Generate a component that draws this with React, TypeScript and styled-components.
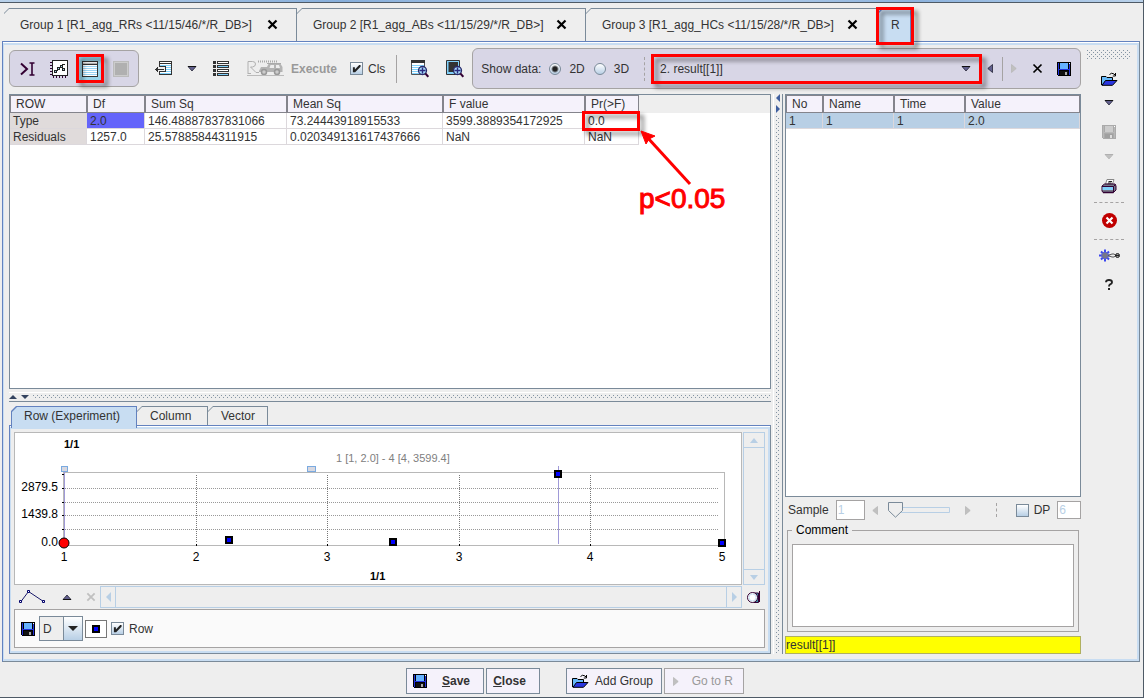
import React from "react";
import styled, { createGlobalStyle, css } from "styled-components";

const c = {
  face: "#eeeeee",
  blue: "#6382bf",
  steel: "#7a8a99",
  sky: "#c8ddf2",
  pale: "#b8cfe5",
  group: "#d8d6e6",
  cell: "#f5f2fb",
  grey: "#a5a3a3",
  text: "#333333",
  red: "#ff0000",
};

const Global = createGlobalStyle`
  * { box-sizing: border-box; }
  body { margin: 0; background: ${c.face}; }
  body, button, input, select, textarea, table {
    font-family: "Liberation Sans", Arial, sans-serif;
    font-size: 12px;
    line-height: 14px;
    color: ${c.text};
  }
  svg { display: block; flex: none; }
`;

const Window = styled.div`
  display: flex;
  flex-direction: column;
  min-height: 100vh;
  border-right: 1px solid #4e5a66;
  border-bottom: 1px solid #4e5a66;
`;

const TopStrip = styled.div`
  height: 3px;
  background: linear-gradient(90deg, #b9d1ea, #86aedb 30%, #bcd4ee 60%, #8cb2dd 80%, #b9d1ea);
  border-bottom: 1px solid #4e5a66;
`;

/* ---------- tabs ---------- */

const TabList = styled.ul<{ $top: number; $left: number }>`
  display: flex;
  align-items: flex-end;
  gap: 0;
  list-style: none;
  margin: 0;
  padding: ${(p) => p.$top}px 0 0 ${(p) => p.$left}px;
`;

const TabItem = styled.li<{ $active?: boolean }>`
  position: relative;
  display: flex;
  ${(p) => p.$active && css`z-index: 1; margin-bottom: -3px; padding-bottom: 0;`}
`;

const TabFace = styled.button<{ $width: number; $height: number; $pad: number; $active?: boolean }>`
  position: relative;
  display: flex;
  align-items: center;
  width: ${(p) => p.$width}px;
  height: ${(p) => p.$height + (p.$active ? 3 : 0)}px;
  padding: 0 19px ${(p) => (p.$active ? 3 : 0)}px ${(p) => p.$pad}px;
  border: 0;
  white-space: nowrap;
  background: ${(p) => (p.$active ? c.blue : c.steel)};
  clip-path: polygon(5px 0, 100% 0, 100% 100%, 0 100%, 0 5px);
  &::before {
    content: "";
    position: absolute;
    inset: 1px 1px 0 ${(p) => (p.$active ? 1 : 0)}px;
    background: ${(p) => (p.$active ? c.sky : c.face)};
    clip-path: polygon(5px 0, 100% 0, 100% 100%, 0 100%, 0 5px);
  }
  > * { position: relative; }
  > svg { margin-left: auto; }
`;

const Callout = styled.span<{ $inset: string }>`
  position: absolute;
  inset: ${(p) => p.$inset};
  border: 3px solid ${c.red};
  filter: drop-shadow(4px 4px 2px rgba(0, 0, 0, 0.45));
  pointer-events: none;
  z-index: 2;
`;

/* ---------- framed panels ---------- */

const Frame = styled.section<{ $margin?: string; $grow?: boolean }>`
  display: flex;
  flex: ${(p) => (p.$grow ? "1 0 auto" : "none")};
  margin: ${(p) => p.$margin || "0"};
  padding-top: 1px;
  background: #ffffff;
  border: 1px solid ${c.blue};
  border-right-color: ${c.steel};
  border-bottom-color: ${c.steel};
`;

const FrameBody = styled.div<{ $column?: boolean }>`
  display: flex;
  flex: 1;
  min-width: 0;
  flex-direction: ${(p) => (p.$column ? "column" : "row")};
  gap: ${(p) => (p.$column ? 1 : 0)}px;
  padding: ${(p) => (p.$column ? "3px" : "0")};
  background: ${c.face};
  border: 2px solid ${c.sky};
  border-left-width: 1px;
`;

const Work = styled.div`
  display: flex;
  flex-direction: column;
  flex: 1;
  min-width: 0;
  gap: 5px;
  padding: 3px 0 5px 5px;
`;

/* ---------- toolbar ---------- */

const Toolbar = styled.div`
  display: flex;
  align-items: center;
  height: 41px;
`;

const Group = styled.div<{ $grow?: boolean }>`
  display: flex;
  align-items: center;
  flex: ${(p) => (p.$grow ? "1" : "none")};
  min-width: 0;
  height: ${(p) => (p.$grow ? 41 : 37)}px;
  padding: ${(p) => (p.$grow ? "0 2px 0 8px" : "0 2px")};
  background: ${c.group};
  border: 1px solid ${c.grey};
  border-radius: 6px;
`;

const IconButton = styled.button<{ $w: number; $h?: number; $before?: number }>`
  position: relative;
  display: flex;
  align-items: center;
  justify-content: center;
  gap: 6px;
  flex: none;
  width: ${(p) => p.$w}px;
  height: ${(p) => p.$h || 24}px;
  margin: 0 0 0 ${(p) => p.$before || 0}px;
  padding: 0;
  border: 0;
  background: none;
  white-space: nowrap;
`;

const Pressed = styled.span`
  display: flex;
  align-items: center;
  justify-content: center;
  width: 23px;
  height: 23px;
  background: #9ad4ea;
`;

const ExecuteButton = styled(IconButton)`
  font-weight: bold;
  color: #999999;
`;

const Rule = styled.span<{ $h: number; $dashed?: boolean; $m: string }>`
  flex: none;
  height: ${(p) => p.$h}px;
  margin: ${(p) => p.$m};
  border-left: 1px ${(p) => (p.$dashed ? "dashed" : "solid")} ${c.grey};
`;

const Choice = styled.label<{ $before?: number }>`
  display: flex;
  align-items: center;
  flex: none;
  gap: 5px;
  margin-left: ${(p) => p.$before || 0}px;
`;

const Tick = styled.input.attrs({ type: "checkbox" })`
  appearance: none;
  position: relative;
  flex: none;
  width: 13px;
  height: 13px;
  margin: 0;
  border: 1px solid ${c.steel};
  background: linear-gradient(#ffffff, ${c.pale});
  &:checked::after {
    content: "";
    position: absolute;
    inset: 1px;
    background: #222222;
    clip-path: polygon(10% 35%, 32% 35%, 32% 60%, 80% 10%, 95% 10%, 95% 30%, 35% 92%, 10% 92%);
  }
`;

const Radio = styled.input.attrs({ type: "radio" })`
  appearance: none;
  flex: none;
  width: 12px;
  height: 12px;
  margin: 0 3px 0 0;
  border: 1px solid ${c.steel};
  border-radius: 50%;
  background: linear-gradient(#ffffff, ${c.pale});
  &:checked {
    background: radial-gradient(circle, #222222 2px, transparent 4px), linear-gradient(#ffffff, ${c.pale});
  }
`;

const ResultPicker = styled.div`
  position: relative;
  display: flex;
  align-items: center;
  flex: 1;
  height: 24px;
  > svg { position: absolute; right: 11px; pointer-events: none; }
`;

const PlainSelect = styled.select`
  appearance: none;
  width: 100%;
  height: 24px;
  padding: 0 24px 0 6px;
  border: 0;
  background: transparent;
`;

/* ---------- split areas ---------- */

const dots = css`
  background-image: conic-gradient(at 1px 1px, transparent 75%, #8494a3 0),
    conic-gradient(at 1px 1px, transparent 75%, #8494a3 0);
  background-size: 4px 4px;
  background-position: 0 0, 2px 2px;
`;

const Split = styled.div`
  display: flex;
  flex: 1;
`;

const LeftPane = styled.div`
  display: flex;
  flex-direction: column;
  flex: 1;
  min-width: 0;
`;

const RightPane = styled.div`
  display: flex;
  flex-direction: column;
  flex: none;
  width: 296px;
`;

const Divider = styled.div`
  display: flex;
  flex-direction: column;
  align-items: center;
  gap: 3px;
  width: 10px;
  margin: 0 2px;
  border-left: 1px solid #ffffff;
  border-right: 1px solid ${c.steel};
`;

const DividerGrip = styled.div<{ $row?: boolean }>`
  flex: 1;
  ${(p) => (p.$row ? "height: 4px;" : "width: 4px;")}
  ${dots}
`;

const RowDivider = styled.div`
  display: flex;
  align-items: center;
  gap: 4px;
  height: 10px;
  margin: 3px 0 0;
  border-top: 1px solid #ffffff;
  border-bottom: 1px solid ${c.steel};
`;

/* ---------- data tables ---------- */

const Sheet = styled.div`
  flex: 1;
  background: linear-gradient(${c.face} 18px, #ffffff 18px);
  border: 1px solid ${c.steel};
`;

const Table = styled.table<{ $fill?: boolean }>`
  table-layout: fixed;
  width: ${(p) => (p.$fill ? "100%" : "629px")};
  border-collapse: separate;
  border-spacing: 0;
`;

const Th = styled.th<{ $w?: number }>`
  width: ${(p) => (p.$w ? p.$w + "px" : "auto")};
  height: 18px;
  padding: 0 5px;
  font-weight: normal;
  text-align: left;
  background: ${c.cell};
  border: 1px solid #84848c;
`;

const Td = styled.td<{ $bg?: string }>`
  position: relative;
  height: 16px;
  padding: 0 3px;
  white-space: nowrap;
  background: ${(p) => p.$bg || "#ffffff"};
  border-right: 1px solid #dcd8dc;
  border-bottom: 1px solid #dcd8dc;
`;

const Note = styled.span`
  position: absolute;
  left: 54px;
  top: 70px;
  font-size: 28px;
  line-height: 32px;
  color: ${c.red};
  -webkit-text-stroke: 1px ${c.red};
`;

const Arrow = styled.svg`
  position: absolute;
  left: 52px;
  top: 14px;
  z-index: 2;
`;

/* ---------- chart ---------- */

const Line = styled.div<{ $h?: number }>`
  display: flex;
  align-items: stretch;
  gap: 1px;
  ${(p) => p.$h && `height: ${p.$h}px;`}
`;

const ChartBox = styled.div`
  flex: 1;
  min-width: 0;
  background: #ffffff;
  border: 1px solid #b8b8b8;
`;

const Chart = styled.svg`
  width: 100%;
  height: auto;
  font-family: "Liberation Sans", Arial, sans-serif;
`;

const Scroll = styled.div<{ $vertical?: boolean }>`
  display: flex;
  flex-direction: ${(p) => (p.$vertical ? "column" : "row")};
  justify-content: space-between;
  flex: ${(p) => (p.$vertical ? "none" : "1")};
  ${(p) => p.$vertical && "width: 22px;"}
  border: 1px solid ${c.pale};
`;

const ScrollButton = styled.button<{ $edge: string }>`
  display: flex;
  align-items: center;
  justify-content: center;
  min-width: 15px;
  height: ${(p) => (p.$edge === "top" || p.$edge === "bottom" ? "15px" : "auto")};
  padding: 0;
  border: 0 solid ${c.pale};
  border-${(p) => p.$edge}-width: 1px;
  background: none;
`;

const Options = styled.div`
  display: flex;
  align-items: center;
  height: 39px;
  padding: 0 6px;
  background: #fafafa;
  border: 1px solid ${c.grey};
`;

const Combo = styled.div`
  position: relative;
  display: flex;
  align-items: center;
  margin-left: 4px;
  > svg { position: absolute; right: 5px; pointer-events: none; }
`;

const ComboSelect = styled.select`
  appearance: none;
  width: 44px;
  height: 25px;
  padding: 0 0 0 3px;
  border: 1px solid ${c.steel};
  background: linear-gradient(90deg, ${c.face} 23px, ${c.steel} 23px, ${c.steel} 24px, transparent 24px),
    linear-gradient(#ffffff, ${c.pale});
`;

const Swatch = styled.button`
  display: flex;
  align-items: center;
  justify-content: center;
  width: 22px;
  height: 18px;
  margin: 0 4px 0 2px;
  padding: 0;
  background: #ffffff;
  border: 1px solid #777777;
`;

/* ---------- right pane ---------- */

const SampleRow = styled.div`
  display: flex;
  align-items: center;
  height: 26px;
  padding-left: 3px;
`;

const NumberBox = styled.input<{ $w: number; $h: number; $before: number }>`
  flex: none;
  width: ${(p) => p.$w}px;
  height: ${(p) => p.$h}px;
  margin-left: ${(p) => p.$before}px;
  padding: 0 1px;
  color: ${c.pale};
  background: #ffffff;
  border: 1px solid ${c.grey};
`;

const Slider = styled.div`
  position: relative;
  flex: none;
  width: 62px;
  height: 16px;
  margin: 0 12px 0 5px;
  input {
    appearance: none;
    position: absolute;
    inset: 0;
    width: 100%;
    margin: 0;
    background: transparent;
  }
  input::-webkit-slider-thumb {
    appearance: none;
    width: 16px;
    height: 16px;
    background: transparent;
  }
`;

const Comment = styled.fieldset`
  display: flex;
  margin: 0 2px 4px;
  padding: 7px 4px 4px;
  border: 1px solid ${c.grey};
  legend {
    padding: 0 4px;
    color: #000000;
  }
`;

const CommentText = styled.textarea`
  flex: 1;
  height: 83px;
  resize: none;
  background: #ffffff;
  border: 1px solid ${c.grey};
`;

const ResultName = styled.input`
  width: 100%;
  height: 18px;
  padding: 0;
  background: #ffff00;
  border: 1px solid #b0b060;
`;

/* ---------- side bar and footer ---------- */

const SideBar = styled.aside`
  display: flex;
  flex-direction: column;
  align-items: center;
  flex: none;
  width: 56px;
  padding-top: 5px;
`;

const SideGrip = styled.div`
  width: 44px;
  height: 10px;
  margin-bottom: 7px;
  ${dots}
`;

const SideButton = styled(IconButton)<{ $after: number }>`
  margin-bottom: ${(p) => p.$after}px;
`;

const SideRule = styled.hr<{ $after: number }>`
  width: 30px;
  margin: 0 0 ${(p) => p.$after}px;
  border: 0;
  border-top: 1px dashed ${c.grey};
`;

const Footer = styled.footer`
  display: flex;
  justify-content: center;
  gap: 2px;
  padding: 6px 0 3px 7px;
`;

const FooterButton = styled.button<{ $w: number; $bold?: boolean; $before?: number }>`
  display: flex;
  align-items: center;
  justify-content: space-between;
  width: ${(p) => p.$w}px;
  height: 26px;
  margin: 0 0 0 ${(p) => p.$before || 0}px;
  padding: 0 ${(p) => (p.$bold ? 13 : 8)}px 0 ${(p) => (p.$bold ? 6 : 5)}px;
  font-weight: ${(p) => (p.$bold ? "bold" : "normal")};
  background: ${c.cell};
  border: 1px solid ${c.steel};
  &:disabled { color: #999999; border-color: #a5a3a3; padding: 0 10px 0 8px; }
  > span:only-child { margin: 0 auto; }
`;

/* ---------- icons ---------- */

const Cross = ({ size = 11, weight = 2, color = "#000" }) => (
  <svg width={size} height={size} viewBox="0 0 11 11">
    <path d="M1.5 1.5 9.5 9.5M9.5 1.5 1.5 9.5" stroke={color} strokeWidth={weight} fill="none" />
  </svg>
);

const Down = ({ off = false }) => (
  <svg width="10" height="6" viewBox="0 0 10 6">
    <path d="M1 .5H9L5 5Z" fill={off ? "#c0c0c0" : "#62608e"} stroke={off ? "#b8b8b8" : "#222233"} strokeWidth="0.8" />
    <path d="M1 .5H9" stroke={off ? "#b0b0b0" : "#111"} />
  </svg>
);

const Up = () => (
  <svg width="10" height="6" viewBox="0 0 10 6">
    <path d="M1 5.500H9L5 1Z" fill="#62608e" stroke="#222233" strokeWidth="0.8" />
    <path d="M1 5.500H9" stroke="#111" />
  </svg>
);

const Side = ({ left = false, off = false }) => (
  <svg width="6" height="9" viewBox="0 0 6 9">
    <path
      d={left ? "M5.5.5V8.5L.8 4.5Z" : "M.5.5V8.5L5.2 4.5Z"}
      fill={off ? "#c0c0c0" : "#62608e"}
      stroke={off ? "#b8b8b8" : "#222233"}
      strokeWidth="0.8"
    />
  </svg>
);

const Tri = ({ d, w, h, fill = c.pale }: { d: string; w: number; h: number; fill?: string }) => (
  <svg width={w} height={h} viewBox={`0 0 ${w} ${h}`}>
    <path d={d} fill={fill} />
  </svg>
);

const Floppy = ({ off = false }) => (
  <svg width="14" height="14" viewBox="0 0 14 14" shapeRendering="crispEdges">
    <path d="M0 0H14V14H1L0 13Z" fill={off ? "#aaaaaa" : "#000"} />
    <path d="M1 1H2V13H1ZM12 2H13V13H12ZM2 7H12V8H2Z" fill={off ? "#b8b8b8" : "#2233dd"} />
    <path d="M3 1H11V7H3Z" fill={off ? "#cccccc" : "#66b2ff"} />
    <path d="M3 9H11V13H3Z" fill={off ? "#a0a0a0" : "#111"} />
    <path d="M8 10H10V13H8Z" fill={off ? "#dddddd" : "#aaa"} />
    <path d="M12 1H13V2H12Z" fill="#fff" />
  </svg>
);

const Folder = () => (
  <svg width="17" height="14" viewBox="0 0 17 14">
    <path d="M.5 13V4.500H5L6 5.500H11.500V8.500" fill="#66b8f8" stroke="#000" />
    <path d="M1 13.300 4.500 8.500H16L11.500 13.300Z" fill="#2a36e0" stroke="#000" />
    <path d="M8.500 2.500Q10.500 .2 13 2L14.500 3.500M14.500 1V4H11.800" fill="none" stroke="#000" />
  </svg>
);

const PromptIcon = () => (
  <svg width="15" height="14" viewBox="0 0 15 14">
    <path d="M1 1.500 7 7 1 12.500" fill="none" stroke="#330033" strokeWidth="2" />
    <path d="M9.500 1H14.500M12 1V13M9.500 13H14.500" stroke="#330033" strokeWidth="1.600" />
  </svg>
);

const PlotIcon = () => (
  <svg width="18" height="18" viewBox="0 0 18 18" shapeRendering="crispEdges">
    <path d="M2.500 .5H17.500V15.500H2.500Z" fill="#fff" stroke="#222" />
    <path d="M0 2.500H2M0 5.500H2M0 8.500H2M0 11.500H2M0 14.500H2M3.500 16V18M6.500 16V18M9.500 16V18M12.500 16V18M15.500 16V18" stroke="#330033" />
    <path d="M4.500 10.500H6.500V12.500H4.500ZM7.500 7.500H9.500V9.500H7.500ZM10.500 5.500H12.500V7.500H10.500ZM12.500 8.500H14.500V10.500H12.500Z" fill="#9ad4ea" stroke="#222" />
    <path d="M6 10.500H8M9 7.500H11M12 4.500H15" stroke="#222" />
  </svg>
);

const TableIcon = ({ off = false }) =>
  off ? (
    <svg width="16" height="16" viewBox="0 0 16 16" shapeRendering="crispEdges">
      <path d="M.5 .5H15.500V15.500H.5Z" fill="#cccccc" stroke="#bbbbbb" />
      <path d="M2 2H14V14H2Z" fill="#b0b0b0" />
    </svg>
  ) : (
    <svg width="16" height="16" viewBox="0 0 16 16" shapeRendering="crispEdges">
      <path d="M.5 .5H15.500V15.500H.5Z" fill="#fff" stroke="#333" />
      <path d="M1 3.500H15" stroke="#333" />
      <path d="M1 2.500H15" stroke="#bbb" />
      <path d="M1 5.500H15M1 7.500H15M1 9.500H15M1 11.500H15M1 13.500H15" stroke="#9ad4f4" />
    </svg>
  );

const InsertIcon = () => (
  <svg width="18" height="15" viewBox="0 0 18 15" shapeRendering="crispEdges">
    <path d="M4.500 .5H16.500V13.500H4.500Z" fill="#fff" stroke="#333" />
    <path d="M5 4.500H16M11 6.500H16M11 8.500H16M11 10.500H16M5 12.500H16" stroke="#80d0fa" />
    <path d="M4 2.500H17" stroke="#333" />
    <path d="M2 6H10V11H2Z" fill="#eee" />
    <path d="M0 8.500H9M4 5.500H10.500V10.500H4M2.500 6V11M1.500 7V10" fill="none" stroke="#333" />
  </svg>
);

const ListIcon = () => (
  <svg width="16" height="15" viewBox="0 0 16 15" shapeRendering="crispEdges">
    {[0, 4, 8, 12].map((y) => (
      <g key={y}>
        <path d={`M0 ${y}H3V${y + 3}H0Z`} fill="#333" />
        <path d={`M4.500 ${y + 0.5}H15.500V${y + 2.5}H4.500Z`} fill={y % 8 ? "#80d0fa" : "#fff"} stroke="#333" />
      </g>
    ))}
  </svg>
);

const TruckIcon = () => (
  <svg width="38" height="17" viewBox="0 0 38 17">
    <path d="M1 14V1.500H5.500Q8.500 1.500 8.500 4T5.500 7H3.500L9 12.500H12" fill="none" stroke="#b0b0b0" />
    <path d="M1 13.500H4" stroke="#b0b0b0" />
    <path d="M12 11 14 7H20L22 3H33L35.500 7V12H12Z" fill="#b4b4b4" />
    <path d="M11 1.500H31" stroke="#aaaaaa" strokeWidth="2" strokeDasharray="1 1" />
    <path d="M20 3.500H34" stroke="#aaaaaa" />
    <path d="M23.500 5H27V8H22.500ZM29 5H32L33 8H29Z" fill="#eee" />
    <circle cx="17" cy="12" r="2.500" fill="#ccc" stroke="#999" strokeWidth="1.500" />
    <circle cx="30" cy="12" r="2.500" fill="#ccc" stroke="#999" strokeWidth="1.500" />
    <path d="M0 15.500H37" stroke="#bbb" />
  </svg>
);

const ZoomSheetIcon = ({ dark = false }) => (
  <svg width="18" height="18" viewBox="0 0 18 18">
    {dark ? (
      <>
        <path d="M.5 .5H13.500V14.500H.5Z" fill="#80d0fa" stroke="#333" />
        <path d="M2.500 2H12V12H2.500Z" fill="#333" />
      </>
    ) : (
      <>
        <path d="M.5 .5H13.500V14.500H.5Z" fill="#fff" stroke="#555" />
        <path d="M0 0H14V3H0Z" fill="#333" />
        <path d="M1 5.500H13M1 7.500H13M1 9.500H13M1 11.500H13M1 13.500H13" stroke="#80d0fa" />
      </>
    )}
    <circle cx="11.500" cy="10.500" r="4" fill="#a8dcfa" stroke="#2a2a6a" strokeWidth="1.300" />
    <path d="M8.500 10.500H14.500M11.500 7.500V13.500" stroke="#2a2a80" strokeWidth="1.400" />
    <path d="M14.300 13.300 17.300 16.800" stroke="#330033" strokeWidth="2" />
  </svg>
);

const PrinterIcon = () => (
  <svg width="16" height="16" viewBox="0 0 16 16">
    <path d="M4.500 6 6 1.500H13L11.500 6Z" fill="#fff" stroke="#888" />
    <path d="M7.500 3.500H11M7 5H10.500" stroke="#222" />
    <path d="M1 8 3.500 6H14L15 8V12L12.500 14.500H2L1 13Z" fill="#777788" stroke="#330033" />
    <path d="M1.500 9H12V12H1.500Z" fill="#80d0fa" />
    <path d="M1 8.500H12.500L14.500 6.500M12.500 8.500V14" fill="none" stroke="#330033" />
    <path d="M2 14.500H12.500" stroke="#330033" strokeWidth="1.500" />
  </svg>
);

const StopIcon = () => (
  <svg width="15" height="15" viewBox="0 0 15 15">
    <circle cx="7.500" cy="7.500" r="7.500" fill="#c00000" />
    <path d="M4.500 4.500 10.500 10.500M10.500 4.500 4.500 10.500" stroke="#fff" strokeWidth="2.200" />
  </svg>
);

const GearIcon = () => (
  <svg width="21" height="13" viewBox="0 0 21 13">
    <path d="M6 .5V12.500M0 6.500H12M2 2.500 10 10.500M10 2.500 2 10.500" stroke="#3a46f0" strokeWidth="2" />
    <circle cx="6" cy="6.500" r="3.400" fill="#777788" stroke="#5a64d8" />
    <path d="M9 6.500 13 5H15L17 6.500 15 8H13Z" fill="#eee" stroke="#555" />
    <circle cx="18.500" cy="6.500" r="2" fill="#999" stroke="#222" />
    <path d="M16 6.500H20" stroke="#222" />
  </svg>
);

const HelpIcon = () => (
  <svg width="8" height="11" viewBox="0 0 8 11">
    <path d="M1 3.200Q1 1 4 1T7 3.200Q7 4.500 5.200 5.300 4 6 4 7.500" fill="none" stroke="#222" strokeWidth="1.900" />
    <path d="M3 9H5V11H3Z" fill="#222" />
  </svg>
);

const PolylineIcon = () => (
  <svg width="27" height="14" viewBox="0 0 27 14">
    <path d="M2 11.500 9.500 1.500 24.500 11.500" fill="none" stroke="#1a1a6a" />
    <path d="M.5 10.500H2.500V12.500H.5ZM8.500 .5H10.500V2.500H8.500ZM23.500 10.500H25.500V12.500H23.500Z" fill="#fff" stroke="#00006a" />
  </svg>
);

const LensIcon = () => (
  <svg width="14" height="13" viewBox="0 0 14 13">
    <path d="M7 2H11.500V11.500H7" fill="#3a88a0" stroke="#330033" />
    <path d="M12.500 0V11" stroke="#330033" />
    <circle cx="5.500" cy="6.500" r="5" fill="#fff" stroke="#330033" />
    <circle cx="5.500" cy="6.500" r="3.500" fill="none" stroke="#c8e0f4" />
  </svg>
);

/* ---------- data ---------- */

const columns: [string, number][] = [
  ["ROW", 77],
  ["Df", 58],
  ["Sum Sq", 142],
  ["Mean Sq", 156],
  ["F value", 142],
  ["Pr(>F)", 54],
];

const rows = [
  ["Type", "2.0", "146.48887837831066", "73.24443918915533", "3599.3889354172925", "0.0"],
  ["Residuals", "1257.0", "25.57885844311915", "0.020349131617437666", "NaN", "NaN"],
];

const groups = [
  { label: "Group 1 [R1_agg_RRs <11/15/46/*/R_DB>]", width: 293 },
  { label: "Group 2 [R1_agg_ABs <11/15/29/*/R_DB>]", width: 289 },
  { label: "Group 3 [R1_agg_HCs <11/15/28/*/R_DB>]", width: 291 },
];

const points = [
  [214, 107],
  [378, 109],
  [543, 41],
  [707, 110],
];

const cellColor = (row: number, col: number) => {
  if (col === 0) return "#e0dbdb";
  return row === 0 && col === 1 ? "#6464fa" : undefined;
};

const Plot = () => (
  <Chart viewBox="0 0 726 151" role="img" aria-label="Row values">
    <g shapeRendering="crispEdges" fill="none">
      <path d="M48.500 39.500H709.500V112.500H48.500Z" stroke="#b8b8b8" />
      <path d="M50 55.500H704M50 69.500H704M50 82.500H704M50 96.500H704" stroke="#999" strokeDasharray="1 1" />
      <path d="M181.500 42V110M312.500 42V110M444.500 42V110M575.500 42V110" stroke="#777" strokeDasharray="1 1" />
      <path d="M47 41.500H49M47 55.500H49M47 69.500H49M47 82.500H49M47 96.500H49M44 110.500H49M181.500 111V113M312.500 111V113M444.500 111V113M575.500 111V113" stroke="#000" />
      <path d="M49.500 37V110M543.500 33V111" stroke="#a09ad8" />
      <path d="M46.500 33.500H52.500V38.500H46.500ZM292.500 33.500H300.500V38.500H292.500Z" fill="#d8d8e0" stroke="#7aaae0" />
      {points.map(([x, y]) => (
        <rect key={x} x={x - 3} y={y - 3} width="6" height="6" fill="#0000ff" stroke="#000" strokeWidth="2" />
      ))}
    </g>
    <circle cx="49" cy="110" r="5" fill="#ff0000" stroke="#000" />
    <g fontSize="12" fill="#000">
      <g textAnchor="end">
        <text x="43" y="58">2879.5</text>
        <text x="43" y="85">1439.8</text>
        <text x="43" y="113">0.0</text>
      </g>
      <g textAnchor="middle">
        <text x="49" y="128">1</text>
        <text x="181" y="128">2</text>
        <text x="312" y="128">3</text>
        <text x="444" y="128">3</text>
        <text x="575" y="128">4</text>
        <text x="707" y="128">5</text>
      </g>
    </g>
    <g fontSize="11" fontWeight="bold" fill="#000">
      <text x="49" y="15">1/1</text>
      <text x="355" y="147">1/1</text>
    </g>
    <text x="321" y="29" fontSize="11" fill="#808080">1 [1, 2.0] - 4 [4, 3599.4]</text>
  </Chart>
);

export default function App() {
  return (
    <Window>
      <Global />
      <TopStrip />
      <TabList $top={5} $left={4}>
        {groups.map((g) => (
          <TabItem key={g.label}>
            <TabFace $width={g.width} $height={33} $pad={16}>
              <span>{g.label}</span>
              <Cross weight={2.2} />
            </TabFace>
          </TabItem>
        ))}
        <TabItem $active>
          <TabFace $width={34} $height={33} $pad={14} $active>
            <span>R</span>
          </TabFace>
          <Callout $inset="-1px -3px -1px -1px" />
        </TabItem>
      </TabList>

      <Frame $grow $margin="0 3px 0 2px">
        <FrameBody>
          <Work>
            <Toolbar>
              <Group>
                <IconButton $w={31} aria-label="Prompt"><PromptIcon /></IconButton>
                <IconButton $w={31} aria-label="Plot"><PlotIcon /></IconButton>
                <IconButton $w={31} aria-label="Table">
                  <Pressed><TableIcon /></Pressed>
                  <Callout $inset="-3px 1px -2px 2px" />
                </IconButton>
                <IconButton $w={31} aria-label="Stop" disabled><TableIcon off /></IconButton>
              </Group>
              <IconButton $w={32} $before={9} aria-label="Insert"><InsertIcon /></IconButton>
              <IconButton $w={24} aria-label="Insert options"><Down /></IconButton>
              <IconButton $w={34} aria-label="List"><ListIcon /></IconButton>
              <ExecuteButton $w={94} $before={7} disabled><TruckIcon />Execute</ExecuteButton>
              <Choice $before={11}><Tick defaultChecked />Cls</Choice>
              <Rule $h={28} $m="0 6px 0 11px" />
              <IconButton $w={34} aria-label="Zoom table"><ZoomSheetIcon /></IconButton>
              <IconButton $w={35} aria-label="Zoom selection"><ZoomSheetIcon dark /></IconButton>
              <Group $grow>
                <span>Show data:</span>
                <Choice $before={8}><Radio name="dim" defaultChecked />2D</Choice>
                <Choice $before={9}><Radio name="dim" />3D</Choice>
                <Rule $h={24} $dashed $m="0 9px 0 15px" />
                <ResultPicker>
                  <PlainSelect aria-label="Result"><option>2. result[[1]]</option></PlainSelect>
                  <Down />
                  <Callout $inset="-3px 0 -3px -3px" />
                </ResultPicker>
                <IconButton $w={16} aria-label="Previous"><Side left /></IconButton>
                <Rule $h={24} $m="0 1px 0 4px" />
                <IconButton $w={20} aria-label="Next" disabled><Side off /></IconButton>
                <IconButton $w={26} aria-label="Remove"><Cross weight={1.7} /></IconButton>
                <IconButton $w={28} aria-label="Save result"><Floppy /></IconButton>
              </Group>
            </Toolbar>

            <Split>
              <LeftPane>
                <Sheet>
                  <Table>
                    <thead>
                      <tr>{columns.map(([name, w]) => <Th key={name} $w={w}>{name}</Th>)}</tr>
                    </thead>
                    <tbody>
                      {rows.map((row, r) => (
                        <tr key={row[0]}>
                          {row.map((value, i) => (
                            <Td key={i} $bg={cellColor(r, i)}>
                              {value}
                              {r === 0 && i === 5 && (
                                <>
                                  <Callout $inset="-2px -2px -3px -3px" />
                                  <Arrow width="56" height="60" viewBox="0 0 56 60">
                                    <path d="M10 10 53 57" stroke={c.red} strokeWidth="3" />
                                    <path d="M4 4 18 9 12 12 9 17Z" fill={c.red} stroke={c.red} />
                                  </Arrow>
                                  <Note>p&lt;0.05</Note>
                                </>
                              )}
                            </Td>
                          ))}
                        </tr>
                      ))}
                    </tbody>
                  </Table>
                </Sheet>
                <RowDivider>
                  <Tri w={8} h={4} d="M0 4 4 0 8 4Z" fill="#33435f" />
                  <Tri w={8} h={4} d="M0 0H8L4 4Z" fill="#33435f" />
                  <DividerGrip $row />
                </RowDivider>
                <TabList $top={4} $left={2}>
                  <TabItem $active><TabFace $width={126} $height={19} $pad={13} $active><span>Row (Experiment)</span></TabFace></TabItem>
                  <TabItem><TabFace $width={71} $height={19} $pad={13}><span>Column</span></TabFace></TabItem>
                  <TabItem><TabFace $width={60} $height={19} $pad={13}><span>Vector</span></TabFace></TabItem>
                </TabList>
                <Frame>
                  <FrameBody $column>
                    <Line>
                      <ChartBox><Plot /></ChartBox>
                      <Scroll $vertical>
                        <ScrollButton $edge="bottom" aria-label="Scroll up"><Tri w={8} h={5} d="M0 5 4 0 8 5Z" /></ScrollButton>
                        <ScrollButton $edge="top" aria-label="Scroll down"><Tri w={8} h={5} d="M0 0H8L4 5Z" /></ScrollButton>
                      </Scroll>
                    </Line>
                    <Line $h={22}>
                      <IconButton $w={37} $h={22} aria-label="Line style"><PolylineIcon /></IconButton>
                      <IconButton $w={29} $h={22} aria-label="Expand"><Up /></IconButton>
                      <IconButton $w={17} $h={22} aria-label="Clear" disabled><Cross size={10} color="#c0c0c0" /></IconButton>
                      <Scroll>
                        <ScrollButton $edge="right" aria-label="Scroll left"><Tri w={5} h={10} d="M5 0V10L0 5Z" /></ScrollButton>
                        <ScrollButton $edge="left" aria-label="Scroll right"><Tri w={5} h={10} d="M0 0V10L5 5Z" /></ScrollButton>
                      </Scroll>
                      <IconButton $w={22} $h={22} aria-label="Lens"><LensIcon /></IconButton>
                    </Line>
                    <Options>
                      <IconButton $w={14} aria-label="Save row"><Floppy /></IconButton>
                      <Combo>
                        <ComboSelect aria-label="Data"><option>D</option></ComboSelect>
                        <Tri w={10} h={5} d="M0 0H10L5 5Z" fill="#222" />
                      </Combo>
                      <Swatch aria-label="Marker">
                        <svg width="8" height="8" shapeRendering="crispEdges">
                          <rect x="1" y="1" width="6" height="6" fill="#0000ff" stroke="#000" strokeWidth="2" />
                        </svg>
                      </Swatch>
                      <Choice><Tick defaultChecked />Row</Choice>
                    </Options>
                  </FrameBody>
                </Frame>
              </LeftPane>

              <Divider>
                <Tri w={4} h={8} d="M4 0V8L0 4Z" fill="#3f5f9f" />
                <Tri w={4} h={8} d="M0 0V8L4 4Z" fill="#3f5f9f" />
                <DividerGrip />
              </Divider>

              <RightPane>
                <Sheet>
                  <Table $fill>
                    <thead>
                      <tr>
                        <Th $w={37}>No</Th>
                        <Th $w={71}>Name</Th>
                        <Th $w={71}>Time</Th>
                        <Th>Value</Th>
                      </tr>
                    </thead>
                    <tbody>
                      <tr>
                        {["1", "1", "1", "2.0"].map((v, i) => <Td key={i} $bg={c.pale}>{v}</Td>)}
                      </tr>
                    </tbody>
                  </Table>
                </Sheet>
                <SampleRow>
                  <label htmlFor="sample">Sample</label>
                  <NumberBox id="sample" defaultValue="1" disabled $w={29} $h={20} $before={7} />
                  <IconButton $w={16} $before={2} aria-label="Previous sample" disabled><Side left off /></IconButton>
                  <Slider>
                    <svg width="62" height="16" viewBox="0 0 62 16">
                      <path d="M11.500 5.500H61.500V10.500H11.500Z" fill="none" stroke={c.pale} />
                      <path d="M.5 .5H14.500V8.500L7.500 15.200 .5 8.500Z" fill={c.face} stroke={c.steel} />
                    </svg>
                    <input type="range" min="1" max="10" defaultValue="1" disabled aria-label="Sample position" />
                  </Slider>
                  <IconButton $w={12} aria-label="Next sample" disabled><Side off /></IconButton>
                  <Rule $h={14} $dashed $m="0 0 0 22px" />
                  <Choice $before={19}><Tick />DP</Choice>
                  <NumberBox aria-label="Decimal places" defaultValue="6" disabled $w={24} $h={18} $before={7} />
                </SampleRow>
                <Comment>
                  <legend>Comment</legend>
                  <CommentText aria-label="Comment" />
                </Comment>
                <ResultName aria-label="Result name" defaultValue="result[[1]]" />
              </RightPane>
            </Split>
          </Work>

          <SideBar>
            <SideGrip />
            <SideButton $w={30} $after={6} aria-label="Open"><Folder /></SideButton>
            <SideButton $w={30} $h={12} $after={11} aria-label="Open options"><Down /></SideButton>
            <SideButton $w={30} $after={7} aria-label="Save" disabled><Floppy off /></SideButton>
            <SideButton $w={30} $h={12} $after={11} aria-label="Save options" disabled><Down off /></SideButton>
            <SideButton $w={30} $after={4} aria-label="Print"><PrinterIcon /></SideButton>
            <SideRule $after={5} />
            <SideButton $w={30} $after={7} aria-label="Cancel"><StopIcon /></SideButton>
            <SideRule $after={3} />
            <SideButton $w={30} $after={5} aria-label="Settings"><GearIcon /></SideButton>
            <SideButton $w={30} $after={0} aria-label="Help"><HelpIcon /></SideButton>
          </SideBar>
        </FrameBody>
      </Frame>

      <Footer>
        <FooterButton $w={78} $bold><Floppy /><span><u>S</u>ave</span></FooterButton>
        <FooterButton $w={54} $bold><span><u>C</u>lose</span></FooterButton>
        <FooterButton $w={96} $before={24}><Folder /><span>Add Group</span></FooterButton>
        <FooterButton $w={80} disabled><Side off /><span>Go to R</span></FooterButton>
      </Footer>
    </Window>
  );
}
